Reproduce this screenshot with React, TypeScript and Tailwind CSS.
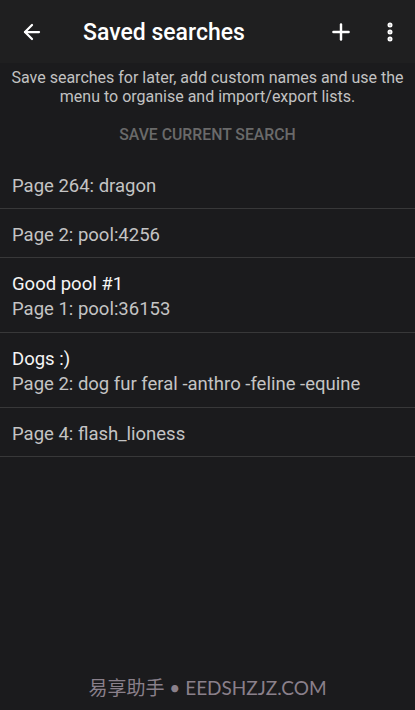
import { ArrowLeft, Plus, EllipsisVertical } from 'lucide-react';

const SEARCHES: { name?: string; query: string }[] = [
  { query: 'Page 264: dragon' },
  { query: 'Page 2: pool:4256' },
  { name: 'Good pool #1', query: 'Page 1: pool:36153' },
  { name: 'Dogs :)', query: 'Page 2: dog fur feral -anthro -feline -equine' },
  { query: 'Page 4: flash_lioness' },
];

export default function App() {
  return (
    <div className="w-[415px] h-[710px] bg-[#1b1b1d] flex flex-col font-['Roboto',sans-serif] overflow-hidden">
      {/* Toolbar */}
      <div className="h-[63px] bg-[#1f1f20] flex items-center shrink-0">
        <button className="w-[64px] h-full flex items-center justify-center text-white">
          <ArrowLeft size={24} strokeWidth={2.25} />
        </button>
        <h1 className="ml-[19px] mt-[3px] text-[23px] font-medium text-white flex-1">Saved searches</h1>
        <button className="w-[48px] h-full flex items-center justify-center text-white">
          <Plus size={26} strokeWidth={2.25} />
        </button>
        <button className="w-[50px] h-full flex items-center justify-center text-white">
          <EllipsisVertical size={24} strokeWidth={3} />
        </button>
      </div>

      {/* Description */}
      <p className="pt-[5px] px-[4px] text-center text-[16px] leading-[19px] text-[#c2c2c2] whitespace-nowrap">
        Save searches for later, add custom names and use the
        <br />
        menu to organise and import/export lists.
      </p>

      <div className="h-[54px] pt-[3px] flex items-center justify-center shrink-0">
        <span className="text-[15.8px] font-medium uppercase text-[#6a6a6a]">Save current search</span>
      </div>

      {/* List */}
      <div className="flex flex-col">
        {SEARCHES.map((s, i) => (
          <div key={i} className="px-[12px] pt-[14px] pb-[10px] border-b border-[#383839]">
            {s.name && <div className="text-[18.5px] leading-[25px] text-[#f5f5f5]">{s.name}</div>}
            <div className={`text-[18.5px] text-[#c4c4c4] ${s.name ? 'leading-[25px]' : 'leading-[24px]'}`}>{s.query}</div>
          </div>
        ))}
      </div>

      <div className="flex-1" />
      <div className="h-[44px] flex items-center justify-center text-[19px] text-[#8a808b] font-['Lato','Noto_Sans_CJK_SC',sans-serif]">
        易享助手 • EEDSHZJZ.COM
      </div>
    </div>
  );
}
